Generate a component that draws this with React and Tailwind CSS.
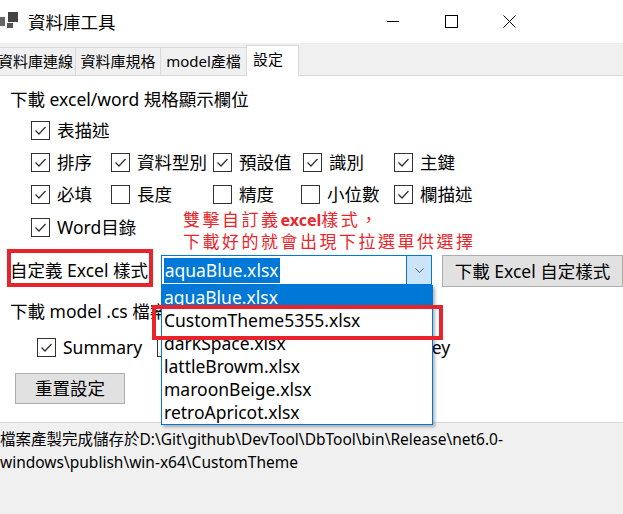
import React from 'react';

function Box({ checked }) {
  return (
    <span className="w-[19px] h-[19px] border border-[#333] bg-white flex items-center justify-center shrink-0">
      {checked && (
        <svg width="13" height="11" viewBox="0 0 13 11">
          <path d="M1.5 5.5 L5 9 L11.5 2" fill="none" stroke="#333" strokeWidth="1.3" />
        </svg>
      )}
    </span>
  );
}

function Option({ label, checked = true, className = '' }) {
  return (
    <div className={`flex items-center gap-[7px] whitespace-nowrap ${className}`}>
      <Box checked={checked} />
      <span>{label}</span>
    </div>
  );
}

const themes = [
  'aquaBlue.xlsx',
  'CustomTheme5355.xlsx',
  'darkSpace.xlsx',
  'lattleBrowm.xlsx',
  'maroonBeige.xlsx',
  'retroApricot.xlsx',
];

export default function App() {
  return (
    <div className="relative w-[623px] h-[514px] overflow-hidden bg-white text-black font-['Noto_Sans','Noto_Sans_CJK_TC',sans-serif] flex flex-col">
      {/* title bar */}
      <div className="h-[43px] flex items-center shrink-0">
        <svg width="20" height="28" viewBox="0 0 20 28" className="shrink-0">
          <rect x="8" y="4" width="10" height="10" fill="#444" />
          <rect x="0" y="9" width="5" height="9" fill="#666" />
          <rect x="7" y="15" width="6" height="5" fill="#555" />
        </svg>
        <span className="ml-[8px] text-[17.5px] leading-[24px]">資料庫工具</span>
        <div className="flex-1" />
        <div className="w-[58px] h-[43px] flex items-center justify-center">
          <span className="w-[12px] h-px bg-black" />
        </div>
        <div className="w-[58px] h-[43px] flex items-center justify-center">
          <span className="w-[13px] h-[13px] border border-black" />
        </div>
        <div className="w-[58px] h-[43px] flex items-center justify-center">
          <svg width="13" height="13" viewBox="0 0 13 13">
            <path d="M0.5 0.5 L12.5 12.5 M12.5 0.5 L0.5 12.5" stroke="#000" strokeWidth="1" />
          </svg>
        </div>
        <div className="w-[85px]" />
      </div>

      {/* tabs */}
      <div className="h-[33px] shrink-0 bg-[#f0f0f0] border-b border-[#d9d9d9] flex items-end text-[15px]">
        <div className="ml-[-4px] w-[80px] h-[28px] border-t border-r border-[#d9d9d9] flex items-center justify-center">資料庫連線</div>
        <div className="w-[85px] h-[28px] border-t border-r border-[#d9d9d9] flex items-center justify-center">資料庫規格</div>
        <div className="w-[85px] h-[28px] border-t border-[#d9d9d9] flex items-center justify-center">model產檔</div>
        <div className="w-[53px] h-[31px] -mb-px bg-white border border-b-0 border-[#d9d9d9] flex items-center pl-[6px] pb-[3px]">設定</div>
      </div>

      {/* content */}
      <div className="flex-1 flex flex-col text-[17.5px]">
        <div className="mt-[11px] h-[24px] leading-[24px] pl-[10px] whitespace-nowrap">下載 excel/word 規格顯示欄位</div>

        <div className="mt-[7px] flex flex-col gap-[8px] pl-[31px]">
          <div className="h-[24px] flex items-center">
            <Option label="表描述" />
          </div>
          <div className="h-[24px] flex items-center">
            <Option label="排序" className="w-[80px]" />
            <Option label="資料型別" className="w-[102px]" />
            <Option label="預設值" className="w-[90px]" />
            <Option label="識別" className="w-[91px]" />
            <Option label="主鍵" />
          </div>
          <div className="h-[24px] flex items-center">
            <Option label="必填" className="w-[80px]" />
            <Option label="長度" checked={false} className="w-[102px]" />
            <Option label="精度" checked={false} className="w-[88px]" />
            <Option label="小位數" checked={false} className="w-[93px]" />
            <Option label="欄描述" />
          </div>
          <div className="h-[24px] flex items-center mt-px">
            <Option label="Word目錄" />
          </div>
        </div>

        <div className="mt-[16px] h-[32px] flex items-start pl-[10px]">
          <div className="w-[151px] h-[30px] flex items-center whitespace-nowrap">自定義 Excel 樣式</div>
          <div className="w-[272px] h-[30px] border border-[#0078d7] flex items-center">
            <span className="ml-[2px] h-[25px] leading-[25px] px-px bg-[#0078d7] text-white">aquaBlue.xlsx</span>
            <span className="ml-auto w-[25px] h-full bg-[#cce4f7] border-l border-[#0078d7] flex items-center justify-center">
              <svg width="9" height="5" viewBox="0 0 9 5">
                <path d="M0.5 0.5 L4.5 4.5 L8.5 0.5" fill="none" stroke="#555" strokeWidth="1" />
              </svg>
            </span>
          </div>
          <div className="ml-[10px] w-[181px] h-[32px] shrink-0 bg-[#e1e1e1] border border-[#adadad] flex items-center justify-center whitespace-nowrap">
            下載 Excel 自定樣式
          </div>
        </div>

        <div className="mt-[12px] h-[24px] leading-[24px] pl-[10px] whitespace-nowrap">下載 model .cs 檔案顯示欄位</div>

        <div className="mt-[12px] h-[24px] flex items-center pl-[37px]">
          <Option label="Summary" className="w-[120px]" />
          <Option label="DisplayName" className="w-[238px]" />
          <Option label="Key" />
        </div>

        <div className="mt-[14px] ml-[15px] w-[110px] h-[31px] bg-[#e1e1e1] border border-[#adadad] flex items-center justify-center">
          重置設定
        </div>
      </div>

      {/* status */}
      <div className="h-[92px] shrink-0 bg-[#f0f0f0] border-t border-[#d9d9d9] pt-[5px] text-[15.5px] leading-[23px] whitespace-nowrap">
        <div>檔案產製完成儲存於D:\Git\github\DevTool\DbTool\bin\Release\net6.0-</div>
        <div>windows\publish\win-x64\CustomTheme</div>
      </div>

      {/* open dropdown list */}
      <div className="absolute left-[161px] top-[285px] w-[272px] h-[140px] bg-white border border-[#0078d7] shadow-[2px_2px_3px_rgba(0,0,0,0.3)] text-[17.5px] leading-[23px]">
        {themes.map((t, i) => (
          <div key={t} className={`h-[23px] pl-[2px] whitespace-nowrap ${i === 0 ? 'bg-[#0078d7] text-white' : ''}`}>{t}</div>
        ))}
      </div>

      {/* annotation */}
      <div className="absolute left-[183px] top-[209px] text-[17px] leading-[22px] tracking-[2.5px] text-[#e8262b] whitespace-nowrap">
        <div>雙擊自訂義<span className="font-bold text-[16px] tracking-normal">excel</span>樣式，</div>
        <div>下載好的就會出現下拉選單供選擇</div>
      </div>
      <div className="absolute left-[7px] top-[249px] w-[146px] h-[38px] border-4 border-[#e8232b]" />
      <div className="absolute left-[152px] top-[305px] w-[291px] h-[35px] border-4 border-[#e8232b]" />
    </div>
  );
}
